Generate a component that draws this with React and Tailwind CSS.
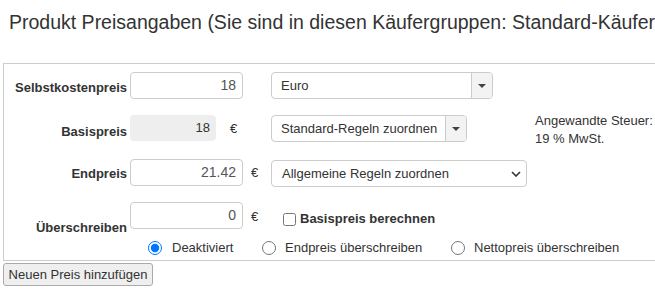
import React from 'react';

const font = { fontFamily: '"Liberation Sans", Arial, sans-serif' };

const Caret = () => (
  <div className="flex h-full w-[21px] items-center justify-center border-l border-[#ccc] bg-[#f3f3f3]">
    <svg width="8" height="4" viewBox="0 0 8 4">
      <path d="M0 0 L8 0 L4 4 Z" fill="#444" />
    </svg>
  </div>
);

const SelectGroup = ({ width, label }) => (
  <div className={`flex h-[27px] items-center overflow-hidden rounded-[4px] border border-[#ccc] bg-white ${width}`}>
    <div className="flex-1 pl-[9px] text-[13px] text-[#333]">{label}</div>
    <Caret />
  </div>
);

const Euro = ({ className }) => <span className={`text-[13px] leading-[15px] text-[#333] ${className}`}>€</span>;

const App = () => {
  return (
    <div className="h-[294px] w-[655px] overflow-hidden bg-white text-[#333]" style={font}>
      <div className="flex items-center pt-[11px]">
        <div className="h-px w-[3px] bg-[#bbb]" />
        <h2 className="ml-[9px] whitespace-nowrap text-[19.5px] leading-[22px] text-[#333]">
          Produkt Preisangaben (Sie sind in diesen Käufergruppen: Standard-Käufer)
        </h2>
      </div>

      <div className="ml-[3px] mt-[30px] border-b border-l border-t border-[#ccc] pb-[4px] pt-[8px]">
        {/* Selbstkostenpreis */}
        <div className="flex h-[27px] items-start">
          <label className="w-[126px] pr-[3px] pt-[8px] text-right text-[13px] font-bold leading-[15px]">Selbstkostenpreis</label>
          <div className="flex w-[141px] items-start">
            <div className="flex h-[27px] w-[113px] items-center justify-end rounded-[4px] border border-[#ccc] pr-[6px] text-[14px] text-[#555]">18</div>
          </div>
          <SelectGroup width="w-[222px]" label="Euro" />
        </div>

        {/* Basispreis */}
        <div className="mt-[16px] flex h-[27px] items-start">
          <label className="w-[126px] pr-[3px] pt-[9px] text-right text-[13px] font-bold leading-[15px]">Basispreis</label>
          <div className="flex w-[141px] items-center">
            <div className="flex h-[26px] w-[86px] items-center justify-end rounded-[4px] bg-[#eee] pr-[6px] text-[13px] text-[#333]">18</div>
            <Euro className="ml-[14px]" />
          </div>
          <SelectGroup width="w-[196px]" label="Standard-Regeln zuordnen" />
          <div className="-mt-[3px] ml-[68px] text-[13px] leading-[18px] text-[#333]">
            <div className="whitespace-nowrap">Angewandte Steuer:</div>
            <div>19 % MwSt.</div>
          </div>
        </div>

        {/* Endpreis */}
        <div className="mt-[17px] flex h-[27px] items-start">
          <label className="w-[126px] pr-[3px] pt-[7px] text-right text-[13px] font-bold leading-[15px]">Endpreis</label>
          <div className="flex h-[27px] w-[141px] items-center">
            <div className="flex h-[27px] w-[113px] items-center justify-end rounded-[4px] border border-[#ccc] pr-[6px] text-[14px] text-[#555]">21.42</div>
            <Euro className="ml-[8px]" />
          </div>
          <div className="mt-px flex h-[27px] w-[256px] items-center justify-between rounded-[4px] border border-[#ccc] bg-white pl-[10px] pr-[5px] text-[13px] text-[#333]">
            <span>Allgemeine Regeln zuordnen</span>
            <svg width="10" height="6" viewBox="0 0 10 6">
              <path d="M1 1 L5 5 L9 1" fill="none" stroke="#333" strokeWidth="1.6" />
            </svg>
          </div>
        </div>

        {/* Überschreiben */}
        <div className="mt-[16px] flex h-[27px] items-start">
          <label className="w-[126px] pr-[3px] pt-[18px] text-right text-[13px] font-bold leading-[15px]">Überschreiben</label>
          <div className="flex h-[27px] w-[141px] items-start">
            <div className="flex h-[27px] w-[113px] items-center justify-end rounded-[4px] border border-[#ccc] pr-[6px] text-[14px] text-[#555]">0</div>
            <Euro className="ml-[8px] mt-[7px]" />
          </div>
          <div className="ml-[12px] mt-[11px] flex items-start">
            <input type="checkbox" readOnly className="m-0 h-[13px] w-[13px]" />
            <span className="-mt-[2px] ml-[4px] text-[13px] font-bold leading-[15px]">Basispreis berechnen</span>
          </div>
        </div>

        {/* radios */}
        <div className="mt-[11px] flex h-[16px] items-center pl-[144px] text-[13px] text-[#333]">
          <label className="flex w-[114px] items-center">
            <input type="radio" name="mode" defaultChecked className="m-0 h-[14px] w-[14px]" />
            <span className="ml-[10px]">Deaktiviert</span>
          </label>
          <label className="flex w-[189px] items-center">
            <input type="radio" name="mode" className="m-0 h-[14px] w-[14px]" />
            <span className="ml-[9px]">Endpreis überschreiben</span>
          </label>
          <label className="flex items-center">
            <input type="radio" name="mode" className="m-0 h-[14px] w-[14px]" />
            <span className="ml-[9px] whitespace-nowrap">Nettopreis überschreiben</span>
          </label>
        </div>
      </div>

      <button className="ml-[3px] mt-[2px] h-[23px] w-[150px] rounded-[3px] border border-[#aaa] bg-[#efefef] text-[13px] text-[#333]">
        Neuen Preis hinzufügen
      </button>
    </div>
  );
};

export default App;
